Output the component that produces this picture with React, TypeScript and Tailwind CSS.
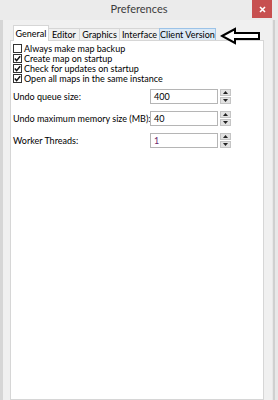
import { ReactNode } from "react";

const font = { fontFamily: 'Lato, "Noto Sans", "Liberation Sans", sans-serif' };

function Check({ checked, label }: { checked?: boolean; label: string }) {
  return (
    <div className="flex items-center h-[10px] gap-[2px]">
      <div className="w-[9px] h-[9px] border border-[#333333] bg-white flex items-center justify-center">
        {checked && (
          <svg width="7" height="7" viewBox="0 0 7 7">
            <path d="M0.8 3.6 L2.6 5.6 L6.2 1.2" fill="none" stroke="#111" strokeWidth="1.5" />
          </svg>
        )}
      </div>
      <span className="text-[9px] leading-none text-black whitespace-nowrap">{label}</span>
    </div>
  );
}

function Spin({ label, value, valueClass }: { label: string; value: string; valueClass?: string }) {
  return (
    <div className="flex items-center h-[15px]">
      <span className="text-[9px] leading-none text-black w-[137px] whitespace-nowrap">{label}</span>
      <div className="w-[68px] h-[15px] border border-[#b5b5b5] bg-white flex items-center px-[3px]">
        <span className={"text-[9px] leading-none " + (valueClass ?? "text-black")}>{value}</span>
      </div>
      <div className="ml-[2px] w-[11px] h-[15px] flex flex-col gap-[1px]">
        <div className="flex-1 bg-[#e2e2e2] border border-[#c4c4c4] flex items-center justify-center">
          <svg width="5" height="3" viewBox="0 0 5 3">
            <path d="M0 3 L2.5 0 L5 3 Z" fill="#222" />
          </svg>
        </div>
        <div className="flex-1 bg-[#e2e2e2] border border-[#c4c4c4] flex items-center justify-center">
          <svg width="5" height="3" viewBox="0 0 5 3">
            <path d="M0 0 L2.5 3 L5 0 Z" fill="#222" />
          </svg>
        </div>
      </div>
    </div>
  );
}

function Tab({ children, w, selected, hot }: { children: ReactNode; w: string; selected?: boolean; hot?: boolean }) {
  if (selected) {
    return (
      <div className={"h-[16px] bg-white border border-b-0 border-[#d6d6d6] flex items-center justify-center text-[9px] text-black relative z-10 -mb-px whitespace-nowrap " + w}>
        {children}
      </div>
    );
  }
  return (
    <div
      className={
        "h-[12px] border border-b-0 flex items-center justify-center text-[9px] text-black -ml-px whitespace-nowrap " +
        w +
        (hot ? " bg-[#dbe9f6] border-[#9cc3e8]" : " bg-[#f0f0f0] border-[#d6d6d6]")
      }
    >
      {children}
    </div>
  );
}

export default function App() {
  return (
    <div className="w-[278px] h-[400px] bg-[#e6e6e6] flex flex-col overflow-hidden select-none" style={font}>
      {/* title bar */}
      <div className="h-[20px] flex items-start relative bg-[#ebebeb]">
        <div className="flex-1 text-center text-[11px] leading-[18px] text-[#3c3c3c]">Preferences</div>
        <div className="absolute right-[6px] top-0 w-[20px] h-[18px] bg-[#c75050] flex items-center justify-center">
          <svg width="7" height="7" viewBox="0 0 7 7">
            <path d="M1 1 L6 6 M6 1 L1 6" stroke="#fff" strokeWidth="1.6" />
          </svg>
        </div>
      </div>

      <div className="flex-1 flex">
        <div className="w-[3px] bg-[#d6d6d6]" />
        <div className="flex-1 bg-[#f0f0f0] flex flex-col pl-[7px] pr-[8px] pt-[5px] relative">
          {/* tabs */}
          <div className="flex items-end h-[15px] pl-[3px]">
            <Tab selected w="w-[36px]">General</Tab>
            <Tab w="w-[32px]">Editor</Tab>
            <Tab w="w-[41px]">Graphics</Tab>
            <Tab w="w-[41px]">Interface</Tab>
            <Tab hot w="w-[57px]">Client Version</Tab>
          </div>
          <svg className="absolute left-[217px] top-[7px]" width="42" height="18" viewBox="0 0 42 18">
            <path d="M2 9 L15 2 L15 6 L39 6 L39 12 L15 12 L15 16 Z" fill="white" stroke="#000" strokeWidth="2" strokeLinejoin="miter" />
          </svg>

          {/* panel */}
          <div className="flex-1 bg-white border border-[#d6d6d6] px-[2px] pt-[2px]">
            <Check label="Always make map backup" />
            <Check checked label="Create map on startup" />
            <Check checked label="Check for updates on startup" />
            <Check checked label="Open all maps in the same instance" />
            <div className="mt-[6px] flex flex-col gap-[7px]">
              <Spin label="Undo queue size:" value="400" />
              <Spin label="Undo maximum memory size (MB):" value="40" />
              <Spin label="Worker Threads:" value="1" valueClass="text-[#6b2a6b]" />
            </div>
          </div>
        </div>
        <div className="w-[6px] bg-[#e8e8e8] flex">
          <div className="w-[2px] ml-[1px] bg-[#d0d0d0]" />
        </div>
      </div>
    </div>
  );
}
